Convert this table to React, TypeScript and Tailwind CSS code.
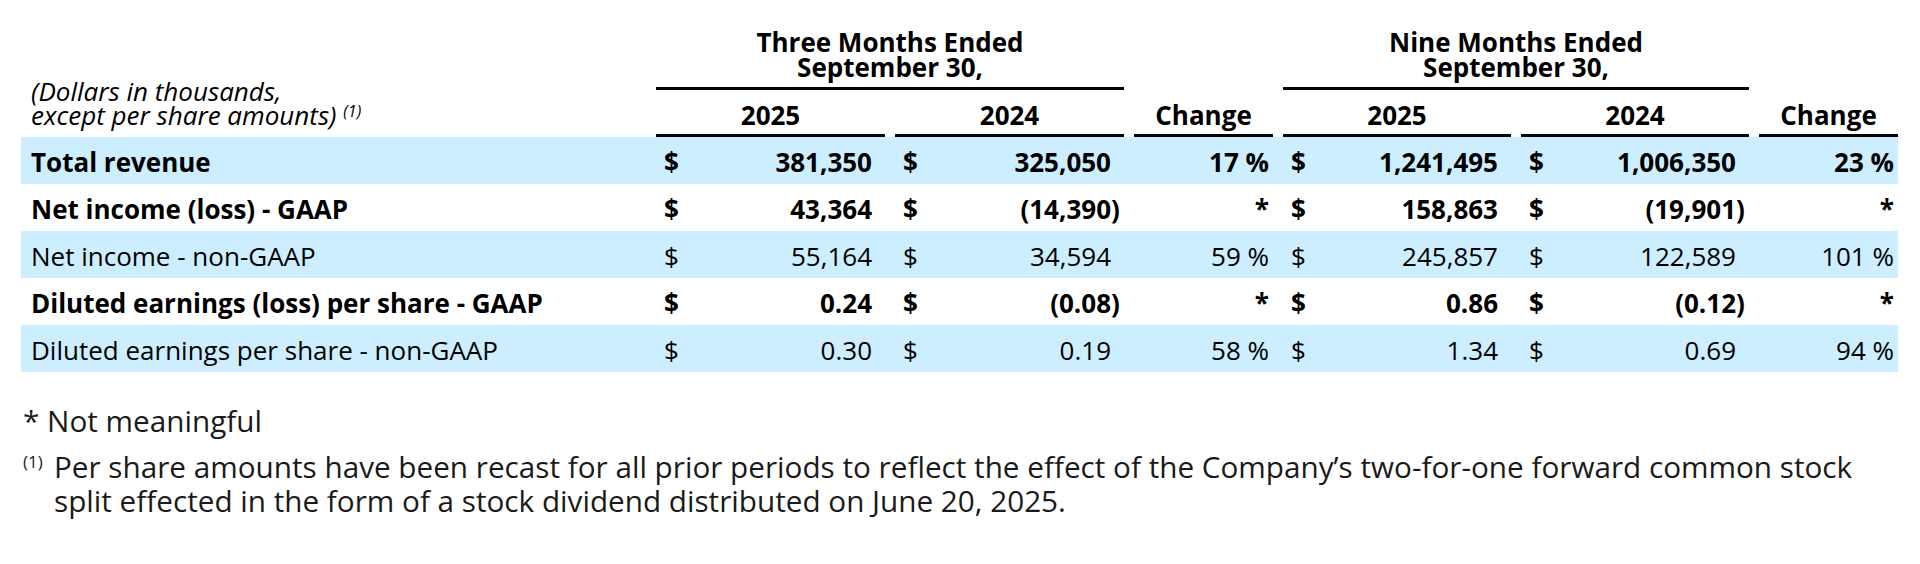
import React from "react";

type Row = {
  label: string;
  bold: boolean;
  blue: boolean;
  v: [string, string, string, string, string, string];
};

const rows: Row[] = [
  { label: "Total revenue", bold: true, blue: true, v: ["381,350", "325,050", "17 %", "1,241,495", "1,006,350", "23 %"] },
  { label: "Net income (loss) - GAAP", bold: true, blue: false, v: ["43,364", "(14,390)", "*", "158,863", "(19,901)", "*"] },
  { label: "Net income - non-GAAP", bold: false, blue: true, v: ["55,164", "34,594", "59 %", "245,857", "122,589", "101 %"] },
  { label: "Diluted earnings (loss) per share - GAAP", bold: true, blue: false, v: ["0.24", "(0.08)", "*", "0.86", "(0.12)", "*"] },
  { label: "Diluted earnings per share - non-GAAP", bold: false, blue: true, v: ["0.30", "0.19", "58 %", "1.34", "0.69", "94 %"] },
];

const GRID = "grid grid-cols-[625px_229px_229px_139px_228px_228px_139px] gap-x-[10px]";

function Money({ value }: { value: string }) {
  const neg = value.endsWith(")");
  const main = neg ? value.slice(0, -1) : value;
  return (
    <div className="flex items-start pl-[8px] pr-[3px]">
      <span>$</span>
      <span className="flex-1 text-right">{main}</span>
      <span className="w-[10px] text-left">{neg ? ")" : ""}</span>
    </div>
  );
}

function Change({ value }: { value: string }) {
  return <div className="text-right pr-[4px]">{value}</div>;
}

export default function App() {
  return (
    <div className="w-[1920px] h-[564px] bg-white text-black font-['Open_Sans',sans-serif] text-[26px]">
      <div className="ml-[21px] w-[1877px]">
        {/* Header */}
        <div className={GRID}>
          <div className="row-span-2 self-end pl-[10px] pb-[10px] italic text-[26px] leading-[24px]">
            (Dollars in thousands,
            <br />
            except per share amounts){" "}
            <sup className="text-[16px]">(1)</sup>
          </div>
          <div className="col-start-2 col-span-2 text-center font-bold leading-[25px] pt-[30px] pb-[7px] border-b-[3px] border-black">
            Three Months Ended
            <br />
            September 30,
          </div>
          <div className="col-start-5 col-span-2 text-center font-bold leading-[25px] pt-[30px] pb-[7px] border-b-[3px] border-black">
            Nine Months Ended
            <br />
            September 30,
          </div>
          {["2025", "2024", "Change", "2025", "2024", "Change"].map((h, i) => (
            <div
              key={i}
              className="row-start-2 text-center font-bold leading-[35px] pt-[8px] pb-[1px] border-b-[3px] border-black"
              style={{ gridColumnStart: i + 2 }}
            >
              {h}
            </div>
          ))}
        </div>

        {/* Body */}
        {rows.map((r, idx) => (
          <div
            key={idx}
            className={`${GRID} h-[47px] leading-[35px] pt-[8px] pb-[4px] ${r.blue ? "bg-[#cceeff]" : "bg-white"} ${r.bold ? "font-bold" : "font-normal"}`}
          >
            <div className="pl-[10px] whitespace-nowrap">{r.label}</div>
            <Money value={r.v[0]} />
            <Money value={r.v[1]} />
            <Change value={r.v[2]} />
            <Money value={r.v[3]} />
            <Money value={r.v[4]} />
            <Change value={r.v[5]} />
          </div>
        ))}
      </div>

      {/* Footnotes */}
      <div className="mt-[32px] leading-[34px] text-[29.7px] text-[#1a1a1a]">
        <div className="pl-[23px]">* Not meaningful</div>
        <div className="flex items-start pl-[23px] mt-[12px]">
          <span className="w-[31px] shrink-0 text-[17px] leading-[17px] mt-[3px]">(1)</span>
          <span className="whitespace-nowrap">
            Per share amounts have been recast for all prior periods to reflect the effect of the Company’s two-for-one forward common stock
            <br />
            split effected in the form of a stock dividend distributed on June 20, 2025.
          </span>
        </div>
      </div>
    </div>
  );
}
